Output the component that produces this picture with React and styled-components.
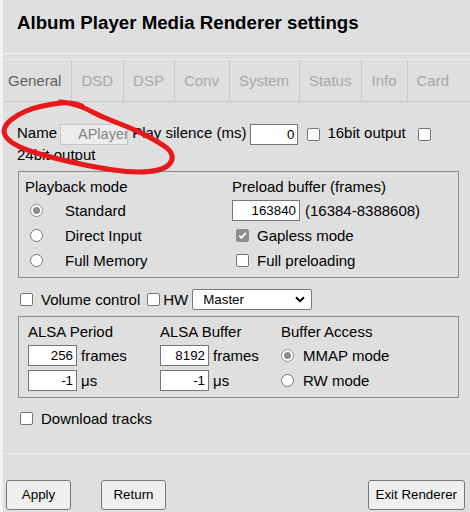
import React from "react";
import styled, { createGlobalStyle } from "styled-components";

const GlobalStyle = createGlobalStyle`
  html, body {
    margin: 0;
    padding: 0;
    background: #f2f2f2;
  }
  body {
    font-family: "Liberation Sans", Arial, sans-serif;
    font-size: 15px;
    color: #000;
  }
`;

const Page = styled.div`
  position: relative;
  width: 470px;
  height: 512px;
  padding-left: 3px;
  box-sizing: border-box;
  overflow: hidden;
`;

const Panel = styled.div`
  background: #dfdfdf;
  height: 100%;
`;

const Header = styled.div`
  height: 54px;
  box-sizing: border-box;
  padding: 12px 0 0 14px;
  border-bottom: 1px solid #f3f3f3;
  margin-bottom: 5px;
`;

const Title = styled.h1`
  margin: 0;
  font-size: 18.7px;
  line-height: 22px;
  font-weight: bold;
  color: #000;
`;

const TabBar = styled.div`
  display: flex;
  height: 43px;
  box-sizing: border-box;
  border-top: 1px solid #ebebeb;
  border-bottom: 1px solid #c9c9c9;
`;

const Tab = styled.div`
  display: flex;
  align-items: center;
  padding: 0 10px 0 ${(p) => (p.$first ? "5px" : "9px")};
  border-right: ${(p) => (p.$last ? "none" : "1px solid #c9c9c9")};
  color: ${(p) => (p.$active ? "#5f5f5f" : "#a8a8a8")};
  font-size: 15px;
`;

const Content = styled.div`
  padding: 21px 11px 0 14px;
`;

const Line = styled.div`
  line-height: 20px;
  width: 442px;
`;

const TextBox = styled.span`
  display: inline-block;
  box-sizing: border-box;
  width: ${(p) => p.$w}px;
  height: 21px;
  vertical-align: middle;
  border: 1px solid ${(p) => (p.$disabled ? "#c6c6c6" : "#767676")};
  background: ${(p) => (p.$disabled ? "#ececec" : "#fff")};
  color: ${(p) => (p.$disabled ? "#858585" : "#000")};
  font-size: ${(p) => (p.$disabled ? "14.5px" : "13.33px")};
  line-height: 19px;
  padding: 0 ${(p) => (p.$disabled ? "0 0 17px" : "3px 0 0")};
  text-align: ${(p) => (p.$disabled ? "left" : "right")};
  white-space: nowrap;
  overflow: hidden;
  margin: ${(p) => p.$m || "0"};
`;

const Box = styled.span`
  display: inline-flex;
  align-items: center;
  justify-content: center;
  box-sizing: border-box;
  width: 13px;
  height: 13px;
  flex: none;
  vertical-align: middle;
  border: 1px solid ${(p) => (p.$checked ? "#8d8d8d" : "#767676")};
  border-radius: 2px;
  background: ${(p) => (p.$checked ? "#8d8d8d" : "#fff")};
  margin: ${(p) => p.$m || "0"};
`;

const Radio = styled.span`
  display: inline-flex;
  align-items: center;
  justify-content: center;
  box-sizing: border-box;
  width: 13px;
  height: 13px;
  flex: none;
  border-radius: 50%;
  border: 1px solid ${(p) => (p.$checked ? "#8d8d8d" : "#767676")};
  background: #fff;
  margin: ${(p) => p.$m || "0"};
  &::after {
    content: "";
    display: ${(p) => (p.$checked ? "block" : "none")};
    width: 7px;
    height: 7px;
    border-radius: 50%;
    background: #8d8d8d;
  }
`;

const Group = styled.div`
  display: grid;
  grid-template-columns: ${(p) => p.$cols};
  grid-template-rows: 22px repeat(${(p) => p.$rows}, 25px);
  align-items: center;
  border: 1px solid #8a8a8a;
  padding: 4px 0 4px ${(p) => p.$pad}px;
  margin-left: 1px;
  margin-top: ${(p) => p.$mt}px;
`;

const Cell = styled.div`
  display: flex;
  align-items: center;
  white-space: nowrap;
`;

const Gap = styled.span`
  display: inline-block;
  width: ${(p) => p.$w}px;
`;

const ControlRow = styled.div`
  display: flex;
  align-items: center;
  height: 22px;
  margin: ${(p) => p.$m};
`;

const SelectBox = styled.div`
  display: flex;
  align-items: center;
  justify-content: space-between;
  box-sizing: border-box;
  width: 120px;
  height: 21px;
  border: 1px solid #767676;
  border-radius: 2px;
  background: #fff;
  padding: 0 6px 0 10px;
  font-size: 13.33px;
  margin-left: 4px;
`;

const Footer = styled.div`
  display: flex;
  border-top: 1px solid #ebebeb;
  margin-top: 23px;
  padding: 26px 5px 0 3px;
  gap: 30px;
`;

const Button = styled.button`
  height: 30px;
  min-width: 65px;
  padding: 0 7px;
  box-sizing: border-box;
  border: 1px solid #767676;
  border-radius: 3px;
  background: #efefef;
  font-family: "Liberation Sans", Arial, sans-serif;
  font-size: 13.33px;
  color: #000;
  margin-left: ${(p) => (p.$right ? "auto" : "0")};
`;

const Overlay = styled.svg`
  position: absolute;
  left: 0;
  top: 0;
  pointer-events: none;
`;

const CheckMark = () => (
  <svg width="9" height="9" viewBox="0 0 9 9">
    <path d="M1.2 4.6 L3.5 6.9 L7.8 1.8" fill="none" stroke="#fff" strokeWidth="1.9" />
  </svg>
);

const Check = ({ checked, m }) => (
  <Box $checked={checked} $m={m}>
    {checked && <CheckMark />}
  </Box>
);

const tabs = ["General", "DSD", "DSP", "Conv", "System", "Status", "Info", "Card"];

const loop = [
  [82, 106], [70, 102], [52, 104], [33, 108], [17, 115], [6, 124], [3, 133],
  [10, 142], [26, 150], [50, 157], [75, 163], [100, 168], [127, 172],
  [150, 172], [166, 168], [173, 160], [171, 151], [160, 143], [140, 132],
  [118, 123], [100, 116], [85, 108], [70, 103], [60, 102],
];

const smoothPath = (pts) => {
  let d = `M${pts[0][0]} ${pts[0][1]}`;
  for (let i = 1; i < pts.length - 1; i++) {
    const mx = (pts[i][0] + pts[i + 1][0]) / 2;
    const my = (pts[i][1] + pts[i + 1][1]) / 2;
    d += ` Q${pts[i][0]} ${pts[i][1]} ${mx} ${my}`;
  }
  const last = pts[pts.length - 1];
  return d + ` L${last[0]} ${last[1]}`;
};

export default function App() {
  return (
    <Page>
      <GlobalStyle />
      <Panel>
        <Header>
          <Title>Album Player Media Renderer settings</Title>
        </Header>
        <TabBar>
          {tabs.map((t, i) => (
            <Tab key={t} $first={i === 0} $last={i === tabs.length - 1} $active={i === 0}>
              {t}
            </Tab>
          ))}
        </TabBar>
        <Content>
          <Line>
            Name<TextBox $w={68} $disabled $m="0 0 0 3px">APlayer</TextBox> Play silence (ms)
            <TextBox $w={48} $m="0 0 0 4px">0</TextBox>
            <Check m="0 7px 0 9px" />
            16bit output
            <Check m="0 0 0 12px" /> 24bit output
          </Line>

          <Group $cols="207px 1fr" $rows={3} $pad={6} $mt={6}>
            <Cell>Playback mode</Cell>
            <Cell>Preload buffer (frames)</Cell>
            <Cell>
              <Radio $checked $m="0 22px 0 5px" />
              Standard
            </Cell>
            <Cell>
              <TextBox $w={68}>163840</TextBox>
              <Gap $w={5} />
              (16384-8388608)
            </Cell>
            <Cell>
              <Radio $m="0 22px 0 5px" />
              Direct Input
            </Cell>
            <Cell>
              <Check checked m="0 8px 0 4px" />
              Gapless mode
            </Cell>
            <Cell>
              <Radio $m="0 22px 0 5px" />
              Full Memory
            </Cell>
            <Cell>
              <Check m="0 8px 0 4px" />
              Full preloading
            </Cell>
          </Group>

          <ControlRow $m="11px 0 5px">
            <Check m="0 8px 0 3px" />
            Volume control
            <Check m="0 3px 0 7px" />
            HW
            <SelectBox>
              Master
              <svg width="10" height="7" viewBox="0 0 10 7">
                <path d="M1 1.2 L5 5.2 L9 1.2" fill="none" stroke="#000" strokeWidth="2" />
              </svg>
            </SelectBox>
          </ControlRow>

          <Group $cols="132px 121px 1fr" $rows={2} $pad={9} $mt={0}>
            <Cell>ALSA Period</Cell>
            <Cell>ALSA Buffer</Cell>
            <Cell>Buffer Access</Cell>
            <Cell>
              <TextBox $w={49}>256</TextBox>
              <Gap $w={4} />
              frames
            </Cell>
            <Cell>
              <TextBox $w={49}>8192</TextBox>
              <Gap $w={4} />
              frames
            </Cell>
            <Cell>
              <Radio $checked $m="0 9px 0 0" />
              MMAP mode
            </Cell>
            <Cell>
              <TextBox $w={49}>-1</TextBox>
              <Gap $w={4} />
              μs
            </Cell>
            <Cell>
              <TextBox $w={49}>-1</TextBox>
              <Gap $w={4} />
              μs
            </Cell>
            <Cell>
              <Radio $m="0 9px 0 0" />
              RW mode
            </Cell>
          </Group>

          <ControlRow $m="10px 0 0">
            <Check m="0 8px 0 3px" />
            Download tracks
          </ControlRow>
        </Content>
        <Footer>
          <Button>Apply</Button>
          <Button>Return</Button>
          <Button $right>Exit Renderer</Button>
        </Footer>
      </Panel>
      <Overlay width="470" height="512" viewBox="0 0 470 512">
        <path
          d={smoothPath(loop)}
          fill="none"
          stroke="#e8191b"
          strokeWidth="5"
          strokeLinecap="round"
          strokeLinejoin="round"
        />
      </Overlay>
    </Page>
  );
}
